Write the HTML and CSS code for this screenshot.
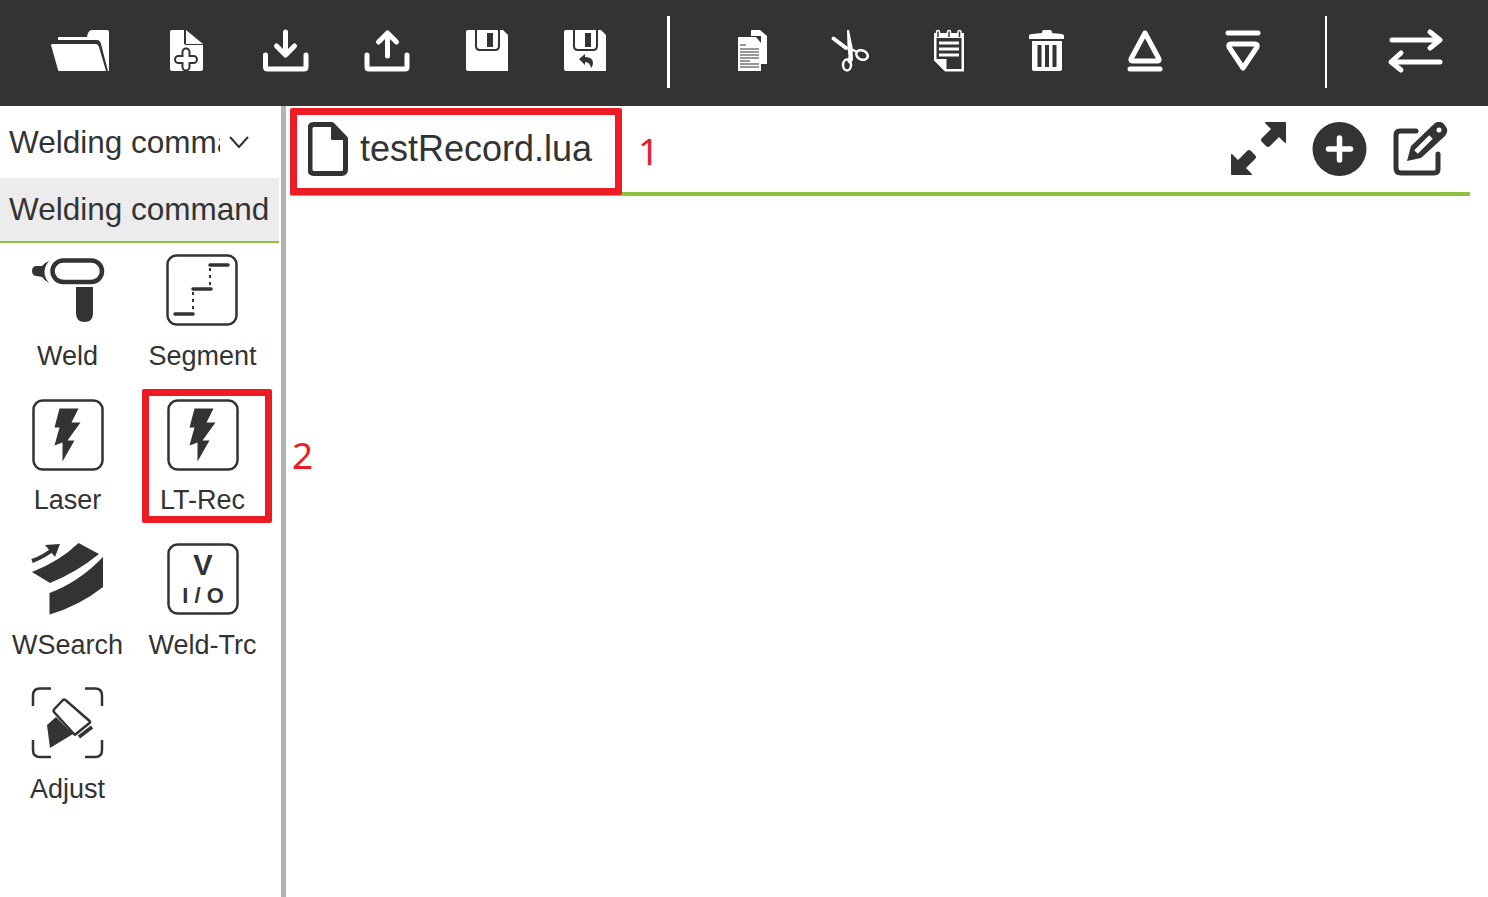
FILE: index.html
```html
<!DOCTYPE html>
<html lang="en">
<head>
  <meta charset="UTF-8" />
  <meta name="viewport" content="width=device-width, initial-scale=1.0"/>
  <title>Welding program editor</title>
  <link rel="stylesheet" href="styles.css">
</head>
<body>

  <!-- top toolbar -->
  <div class="toolbar">
    <div class="tool-group first">
      <svg class="tool" viewBox="35 0 100 106"><path class="w" d="M58 37h29q1-7 5-7h15q2 0 2 2v39h-1l-7-27q-1-4-4-4H58z"/><path class="w" d="M51 45q0-1 2-1h43q2 0 3 3l7 24H59q-1 0-1-1z"/></svg>
      <svg class="tool" viewBox="135 0 100 106"><path class="w" d="M172 30h12v13q0 2 2 2h17v24q0 2-2 2h-29q-2 0-2-2V32q0-2 2-2z"/><path class="w" d="M186 30l17 14h-17z"/><path class="plus-o" d="M186 52v15M178.500 59.500h15"/><path class="plus-i" d="M186 52v15M178.500 59.500h15"/></svg>
      <svg class="tool" viewBox="235 0 100 106"><path class="s" d="M265.500 55v12q0 2 2 2h36.500q2 0 2-2V55"/><path class="s" d="M285.500 32v22M276.500 46l9 9 9-9"/></svg>
      <svg class="tool" viewBox="335 0 100 106"><path class="s" d="M367 55v12q0 2 2 2h36q2 0 2-2V55"/><path class="s" d="M387.500 56V33M378.500 42l9-9 9 9"/></svg>
      <svg class="tool" viewBox="435 0 100 106"><path class="w" d="M468 30h35l5 5v36h-40q-2 0-2-2V32q0-2 2-2z"/><path class="notch" d="M476 30v16q0 4 4 4h15q4 0 4-4V30"/><rect class="d" x="487" y="33" width="6" height="14"/></svg>
      <svg class="tool" viewBox="535 0 100 106"><path class="w" d="M566 30h35l5 5v36h-40q-2 0-2-2V32q0-2 2-2z"/><path class="notch" d="M574 30v16q0 4 4 4h15q4 0 4-4V30"/><rect class="d" x="585" y="33" width="6" height="14"/><path class="d" d="M579 59l6-5v3q8 0 8 6 0 3-2 5-1-6-6-6v3z"/></svg>
    </div>
    <div class="divider thick"></div>
    <div class="tool-group second">
      <svg class="tool" viewBox="703 0 98 106"><path class="w" d="M751 30h9l7 6v28h-6V36h-10z"/><path class="w" d="M738 37h18l5 6v28h-23z"/><path class="thin" d="M740 45h6M740 49h19M740 52h19M740 55h19M740 58h19M740 61h10M740 64h19M740 67h19"/></svg>
      <svg class="tool" viewBox="801 0 98 106"><path class="cut" d="M833.500 38.500L846 48"/><path class="w" d="M847 30h2l3.500 17 .5 13-3 4-2.500-2 1-6-1-8z"/><ellipse class="cut-thin" cx="847" cy="65" rx="4" ry="5.500"/><ellipse class="cut-thin" cx="862" cy="55" rx="6" ry="4.500" transform="rotate(25 862 55)"/><path class="cut-thin" d="M851 49l6 3"/></svg>
      <svg class="tool" viewBox="899 0 98 106"><path class="w" d="M934 33h30v38.500h-19l-11-11z"/><path class="d" d="M936.500 38h25v31h-15V59h-10z"/><path class="stripes" d="M939 43h20M939 49h20M939 55h20"/><path class="rings" d="M936.500 37v-5q0-1.500 1.500-1.500t1.500 1.500v5M947.500 37v-5q0-1.500 1.500-1.500t1.500 1.500v5M958 37v-5q0-1.500 1.500-1.500t1.500 1.500v5"/></svg>
      <svg class="tool" viewBox="997 0 98 106"><path class="w" d="M1044 30h6q2 0 2 3l9 1q3 0 3 2v3h-35v-3q0-2 3-2l10-1q0-3 2-3z"/><path class="w" d="M1032 41h30v28q0 2-2 2h-26q-2 0-2-2z"/><path class="slot" d="M1039.500 45v22M1047 45v22M1054.500 45v22"/></svg>
      <svg class="tool" viewBox="1095 0 98 106"><path class="line" d="M1145 33l14 26q1 2-2 2h-24q-3 0-2-2z"/><path class="line" d="M1130 69h30"/></svg>
      <svg class="tool" viewBox="1193 0 98 106"><path class="line" d="M1228 33h30"/><path class="line" d="M1243 68l-14-21q-1-3 2-3h24q3 0 2 3z"/></svg>
    </div>
    <div class="divider"></div>
    <svg class="tool swap" viewBox="1366 0 100 106"><path class="s" d="M1392 40h48M1430 32l10 8-10 8M1440 62h-48M1401 53l-10 9 10 8"/></svg>
  </div>

  <div class="app">
    <!-- left command panel -->
    <div class="sidebar">
      <div class="sidebar-inner">
        <div class="select-row">
          <span class="select-text">Welding command</span>
          <svg class="chevron" viewBox="0 0 20 12"><path d="M1 1l9 10 9-10"/></svg>
        </div>
        <div class="group-title">Welding command</div>
        <div class="commands">
          <div class="command">
            <svg class="cmd-icon" viewBox="0 0 72 72"><rect class="o4" x="20.500" y="6.500" width="49.500" height="21.500" rx="10.700"/><path class="k" d="M17 7Q8 18 17 29q-5-3-7-6l-5-1q-5 0-5-5t5-5l5 0q2-3 7-5z"/><path class="k" d="M44 33h17v26q0 9-8.500 9T44 59z"/></svg>
            <div class="label">Weld</div>
          </div>
          <div class="command">
            <svg class="cmd-icon" viewBox="1 0 72 72"><rect class="o2" x="1.500" y="1.500" width="69" height="69" rx="9"/><path class="dash" d="M44 11h18M27 35h18M9 60h18"/><path class="dots" d="M44 14v20M27 38v21"/></svg>
            <div class="label">Segment</div>
          </div>
          <div class="command">
            <svg class="cmd-icon" viewBox="0 0 72 72"><rect class="o2" x="1.500" y="1.500" width="69" height="69" rx="9"/><polygon class="k" points="27.500,9.500 46.500,9.500 39.500,23.500 48.500,23.500 35.500,41.500 42.500,41.500 30.500,62.500 30.500,43.500 22.500,46.500 27.500,28.500 22.500,28.500"/></svg>
            <div class="label">Laser</div>
          </div>
          <div class="command">
            <svg class="cmd-icon" viewBox="0 0 72 72"><rect class="o2" x="1.500" y="1.500" width="69" height="69" rx="9"/><polygon class="k" points="27.500,9.500 46.500,9.500 39.500,23.500 48.500,23.500 35.500,41.500 42.500,41.500 30.500,62.500 30.500,43.500 22.500,46.500 27.500,28.500 22.500,28.500"/></svg>
            <div class="label">LT-Rec</div>
          </div>
          <div class="command">
            <svg class="cmd-icon" viewBox="0 0 72 72"><path class="k" d="M46.500 0L67 11Q45 29 18 40L0 29Q28 18 46.500 0z"/><path class="k" d="M71 14v30Q47 63 17.500 71.500V50Q47 39 71 14z"/><path class="arrow" d="M0 18Q12 14 24 4"/><path class="k" d="M13 2l15-1-5 13z"/></svg>
            <div class="label">WSearch</div>
          </div>
          <div class="command">
            <svg class="cmd-icon" viewBox="0 0 72 72"><rect class="o2" x="1.500" y="1.500" width="69" height="69" rx="9"/><text class="v-text" x="36" y="32">V</text><text class="io-text" x="36" y="60">I / O</text></svg>
            <div class="label">Weld-Trc</div>
          </div>
          <div class="command">
            <svg class="cmd-icon" viewBox="0 0 72 72"><path class="o2" d="M19 1.500H8q-7 0-7 7V19M53 1.500h10q7 0 7 7V19M1 53v10q0 7 7 7h11M70 53v10q0 7-7 7H53"/><path class="k" d="M24 30l17 17-23 14-3-23z"/><path class="o25" d="M31 13q1-1 2.500 0l24 21q1 1 0 2L44 47q-1 1-2 0L22 25q-1-1 0-2.500z"/><path class="o3" d="M60 40L47 50"/></svg>
            <div class="label">Adjust</div>
          </div>
        </div>
      </div>
    </div>

    <!-- editor tabs -->
    <div class="main">
      <div class="tabbar">
        <div class="tab">
          <svg class="file-icon" viewBox="0 0 40 54"><path d="M6 2.500h18l13.500 14v31q0 4-4 4H6q-4 0-4-4V6.500q0-4 4-4z"/><path class="fold" d="M24 3l13 14H24z"/></svg>
          <span class="tab-name">testRecord.lua</span>
        </div>
        <div class="tab-actions">
          <svg class="action" viewBox="1231 122 55 54"><path class="k" d="M1266 122h19q1 0 1 1v19q0 2-2 0l-5-5-9 9q-2 2-4 0l-4-4q-2-2 0-4l9-9-5-5q-2-2 0-2zM1251 175h-19q-1 0-1-1v-19q0-2 2 0l5 5 9-9q2-2 4 0l4 4q2 2 0 4l-9 9 5 5q2 2 0 2z"/></svg>
          <svg class="action" viewBox="1312 122 55 54"><circle class="k" cx="1339.500" cy="149" r="27"/><path class="plus-w" d="M1339.500 138v22M1328.500 149h22"/></svg>
          <svg class="action" viewBox="1393 122 55 54"><path class="edit" d="M1416 131h-16q-4 0-4 4v33q0 5 5 5h33q4 0 4-4v-15"/><path class="k" d="M1407 161l4-15 24-23q5-3 9 1l2 3q3 4-1 9l-24 22z"/><path class="pencil-in" d="M1416 152l15-15"/><circle class="w" cx="1439" cy="130" r="2.500"/></svg>
        </div>
      </div>
    </div>
  </div>

  <!-- red annotations over the screenshot -->
  <div class="mark mark-tab"></div>
  <div class="mark-no no-1">1</div>
  <div class="mark mark-cmd"></div>
  <div class="mark-no no-2">2</div>

</body>
</html>
```

FILE: styles.css
```css
* {
  box-sizing: border-box;
}

body {
  margin: 0;
  height: 897px;
  overflow: hidden;
  position: relative;
  background: #fff;
  color: #333;
  font-family: "Liberation Sans", Arial, sans-serif;
}

/* top toolbar */
.toolbar {
  display: flex;
  align-items: center;
  height: 106px;
  background: #333;
}

.tool-group {
  display: flex;
}

.tool-group.first {
  margin-left: 35px;
}

.tool-group.first .tool {
  width: 100px;
}

.tool-group.second {
  margin-left: 33px;
}

.tool-group.second .tool {
  width: 98px;
}

.tool {
  display: block;
  height: 106px;
}

.swap {
  width: 100px;
  margin-left: 39px;
}

.divider {
  width: 2px;
  height: 72px;
  margin-left: 34px;
  margin-bottom: 2px;
  background: #fff;
}

.divider.thick {
  width: 3px;
  margin-left: 32px;
}

.w {
  fill: #fff;
}

.d {
  fill: #333;
}

.s,
.line {
  fill: none;
  stroke: #fff;
  stroke-width: 5;
  stroke-linecap: round;
  stroke-linejoin: round;
}

.plus-o,
.plus-i {
  fill: none;
  stroke-linecap: round;
}

.plus-o {
  stroke: #333;
  stroke-width: 9;
}

.plus-i {
  stroke: #fff;
  stroke-width: 5;
}

.notch {
  fill: #fff;
  stroke: #333;
  stroke-width: 2;
}

.thin {
  fill: none;
  stroke: #333;
  stroke-width: 1.2;
}

.stripes {
  fill: none;
  stroke: #fff;
  stroke-width: 3;
}

.rings {
  fill: #333;
  stroke: #fff;
  stroke-width: 1.5;
}

.slot {
  fill: none;
  stroke: #333;
  stroke-width: 4;
}

.cut {
  fill: none;
  stroke: #fff;
  stroke-width: 4;
  stroke-linecap: round;
}

.cut-thin {
  fill: none;
  stroke: #fff;
  stroke-width: 2.5;
}

/* layout below the toolbar */
.app {
  display: flex;
  height: 791px;
}

.sidebar {
  flex: none;
  width: 286px;
  padding-right: 2px;
  border-right: 5px solid #b3b3b3;
}

.sidebar-inner {
  width: 279px;
}

.select-row {
  display: flex;
  align-items: center;
  height: 72px;
  padding-left: 9px;
}

.select-text {
  width: 211px;
  overflow: hidden;
  white-space: nowrap;
  font-size: 31.5px;
}

.chevron {
  width: 20px;
  height: 12px;
  margin-left: 9px;
  fill: none;
  stroke: #333;
  stroke-width: 2;
}

.group-title {
  height: 65px;
  padding-left: 9px;
  background: #ececec;
  border-bottom: 2px solid #8dc03c;
  font-size: 31.5px;
  line-height: 62px;
  white-space: nowrap;
}

.commands {
  display: grid;
  grid-template-columns: 135px 135px;
  grid-auto-rows: 144.33px;
}

.command {
  display: flex;
  flex-direction: column;
  align-items: center;
  padding-top: 11.4px;
}

.cmd-icon {
  display: block;
  flex: none;
  width: 72px;
  height: 72px;
  overflow: visible;
}

.label {
  margin-top: 14.6px;
  font-size: 27px;
  line-height: 30px;
  white-space: nowrap;
}

.k {
  fill: #333;
}

.o4,
.o2,
.o25,
.o3 {
  fill: none;
  stroke: #333;
}

.o4 {
  stroke-width: 4.5;
}

.o2 {
  stroke-width: 2.5;
}

.o25 {
  fill: #fff;
  stroke-width: 2.5;
}

.o3 {
  stroke-width: 3.5;
}

.dash {
  fill: none;
  stroke: #333;
  stroke-width: 3.5;
  stroke-linecap: round;
}

.dots {
  fill: none;
  stroke: #333;
  stroke-width: 2;
  stroke-dasharray: 3 4;
}

.arrow {
  fill: none;
  stroke: #333;
  stroke-width: 4;
}

.v-text,
.io-text {
  fill: #333;
  font-weight: bold;
  text-anchor: middle;
}

.v-text {
  font-size: 29px;
}

.io-text {
  font-size: 22px;
}

/* editor area */
.main {
  flex: 1;
  padding-left: 4px;
}

.tabbar {
  display: flex;
  justify-content: space-between;
  align-items: center;
  width: 1180px;
  height: 90px;
  border-bottom: 4px solid #8dc03c;
}

.tab {
  display: flex;
  align-items: center;
  padding-left: 18px;
}

.file-icon {
  width: 40px;
  height: 54px;
  fill: none;
  stroke: #333;
  stroke-width: 5;
  stroke-linejoin: round;
}

.file-icon .fold {
  fill: #333;
  stroke-width: 2;
}

.tab-name {
  margin-left: 12px;
  font-size: 36px;
}

.tab-actions {
  display: flex;
  gap: 26px;
  margin-right: 22px;
}

.action {
  display: block;
  width: 55px;
  height: 54px;
}

.plus-w {
  fill: none;
  stroke: #fff;
  stroke-width: 5.5;
  stroke-linecap: round;
}

.edit {
  fill: none;
  stroke: #333;
  stroke-width: 5;
  stroke-linecap: round;
  stroke-linejoin: round;
}

.pencil-in {
  fill: none;
  stroke: #fff;
  stroke-width: 5;
}

/* red annotations */
.mark {
  position: absolute;
  border: 7px solid #ed1c24;
  border-radius: 2px;
}

.mark-tab {
  left: 290px;
  top: 108px;
  width: 332px;
  height: 87px;
}

.mark-cmd {
  left: 142px;
  top: 389px;
  width: 130px;
  height: 134px;
}

.mark-no {
  position: absolute;
  color: #ed1c24;
  font-family: "Noto Sans", sans-serif;
  font-size: 37px;
  line-height: 44px;
}

.no-1 {
  left: 638px;
  top: 129px;
}

.no-2 {
  left: 292px;
  top: 433px;
}
```
